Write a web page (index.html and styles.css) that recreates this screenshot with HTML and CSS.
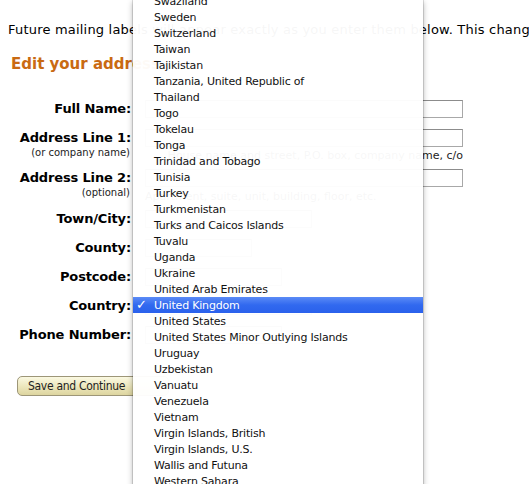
FILE: index.html
```html
<!DOCTYPE html>
<html>
<head>
<meta charset="utf-8">
<link rel="stylesheet" href="styles.css">
</head>
<body>
<div class="page">
  <p class="intro">Future mailing labels will appear exactly as you enter them below. This change will not affect orders you have already placed.</p>
  <h2 class="title">Edit your address</h2>
  <form class="form">
    <div class="row">
      <div class="label"><b>Full Name:</b></div>
      <div class="field"><div class="input"></div></div>
    </div>
    <div class="row tall">
      <div class="label"><b>Address Line 1:</b><small>(or company name)</small></div>
      <div class="field"><div class="input"></div><div class="hint hint-right">House name and street, P.O. box, company name, c/o</div></div>
    </div>
    <div class="row tall">
      <div class="label"><b>Address Line 2:</b><small>(optional)</small></div>
      <div class="field"><div class="input"></div><div class="hint hint-low">Apartment, suite, unit, building, floor, etc.</div></div>
    </div>
    <div class="row">
      <div class="label"><b>Town/City:</b></div>
      <div class="field"><div class="input w-town"></div></div>
    </div>
    <div class="row">
      <div class="label"><b>County:</b></div>
      <div class="field"><div class="input w-county"></div></div>
    </div>
    <div class="row">
      <div class="label"><b>Postcode:</b></div>
      <div class="field"><div class="input w-post"></div></div>
    </div>
    <div class="row">
      <div class="label"><b>Country:</b></div>
      <div class="field"><div class="input w-town"></div></div>
    </div>
    <div class="row">
      <div class="label"><b>Phone Number:</b></div>
      <div class="field"><div class="input w-post"></div></div>
    </div>
    <div class="actions"><span class="button">Save and Continue</span></div>
  </form>
</div>

<div class="menu">
  <ul class="menu-list">
    <li>Swaziland</li>
    <li>Sweden</li>
    <li>Switzerland</li>
    <li>Taiwan</li>
    <li>Tajikistan</li>
    <li>Tanzania, United Republic of</li>
    <li>Thailand</li>
    <li>Togo</li>
    <li>Tokelau</li>
    <li>Tonga</li>
    <li>Trinidad and Tobago</li>
    <li>Tunisia</li>
    <li>Turkey</li>
    <li>Turkmenistan</li>
    <li>Turks and Caicos Islands</li>
    <li>Tuvalu</li>
    <li>Uganda</li>
    <li>Ukraine</li>
    <li>United Arab Emirates</li>
    <li class="selected"><span class="check">✓</span>United Kingdom</li>
    <li>United States</li>
    <li>United States Minor Outlying Islands</li>
    <li>Uruguay</li>
    <li>Uzbekistan</li>
    <li>Vanuatu</li>
    <li>Venezuela</li>
    <li>Vietnam</li>
    <li>Virgin Islands, British</li>
    <li>Virgin Islands, U.S.</li>
    <li>Wallis and Futuna</li>
    <li>Western Sahara</li>
    <li>Yemen</li>
  </ul>
</div>
</body>
</html>
```
FILE: styles.css
```css
html, body {
  margin: 0;
  padding: 0;
  background: #fff;
  overflow: hidden;
  width: 529px;
  height: 484px;
}

body {
  position: relative;
  font-family: "DejaVu Sans", Verdana, sans-serif;
  color: #000;
}

.page {
  padding: 22px 0 0 8px;
}

.intro {
  margin: 0;
  font-size: 13px;
  line-height: 16px;
  letter-spacing: 0.2px;
  white-space: nowrap;
}

.title {
  margin: 16px 0 0 3px;
  font-size: 15px;
  line-height: 20px;
  font-weight: bold;
  color: #c96a12;
}

.form {
  margin: 26px 0 0 0;
  display: flex;
  flex-direction: column;
}

.row {
  display: flex;
  gap: 14px;
  margin-bottom: 11px;
}

.row.tall {
  margin-bottom: 7px;
}

.label {
  width: 123px;
  flex: none;
  display: flex;
  flex-direction: column;
  align-items: flex-end;
}

.label b {
  font-size: 13px;
  line-height: 18px;
  font-weight: bold;
  letter-spacing: -0.15px;
  white-space: nowrap;
}

.label small {
  font-size: 10px;
  line-height: 12px;
  color: #222;
  white-space: nowrap;
  margin-right: 1px;
}

.field {
  width: 318px;
  display: flex;
  flex-direction: column;
}

.input {
  height: 16px;
  width: 316px;
  border: 1px solid #a8a8a8;
  border-top-color: #8c8c8c;
  background: #fff;
}

.input.w-town { width: 165px; }
.input.w-county { width: 105px; }
.input.w-post { width: 135px; }

.hint {
  padding-top: 3px;
  font-size: 11px;
  line-height: 12px;
  color: #222;
  white-space: nowrap;
}

.hint-right {
  text-align: right;
}

.hint-low {
  padding-top: 4px;
}

.actions {
  margin-top: 20px;
  padding-left: 9px;
}

.button {
  display: inline-block;
  height: 18px;
  width: 140px;
  padding-left: 10px;
  border: 1px solid #9d9678;
  border-radius: 5px;
  background: linear-gradient(#fbf9e2, #ece6bb 55%, #ddd5a0);
  font-family: "DejaVu Sans Condensed", "DejaVu Sans", sans-serif;
  font-stretch: condensed;
  font-size: 12px;
  line-height: 18px;
  letter-spacing: -0.3px;
  color: #1e1e1e;
}

/* popup menu overlay */
.menu {
  position: absolute;
  left: 133px;
  top: 0;
  width: 290px;
  height: 500px;
  overflow: hidden;
  background: rgba(255, 255, 255, 0.965);
  box-shadow: 0 0 0 1px rgba(0, 0, 0, 0.12), 0 2px 6px rgba(0, 0, 0, 0.32);
}

.menu-list {
  list-style: none;
  margin: -7px 0 0 0;
  padding: 0;
  font-family: "DejaVu Sans", "Lucida Grande", sans-serif;
  font-size: 11px;
  letter-spacing: -0.2px;
}

.menu-list li {
  height: 16px;
  line-height: 17px;
  padding-left: 21px;
  position: relative;
  white-space: nowrap;
  color: #111;
}

.menu-list li.selected {
  background: linear-gradient(#5b8bf6, #3169ef 50%, #2a61ec);
  color: #fff;
}

.check {
  position: absolute;
  left: 3px;
  top: 0;
  font-weight: bold;
  font-size: 13px;
  line-height: 16px;
}
```
